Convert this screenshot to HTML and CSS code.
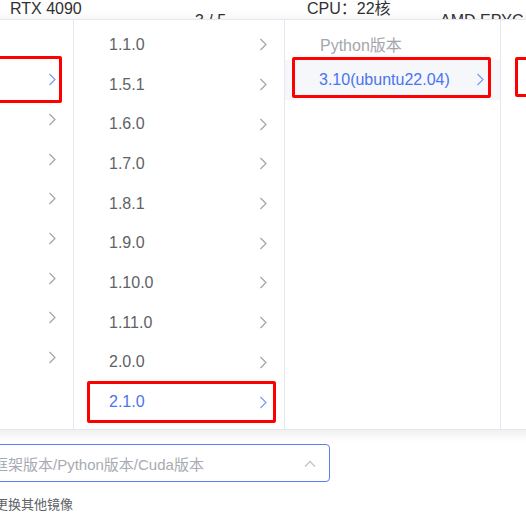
FILE: index.html
```html
<!DOCTYPE html>
<html lang="zh-CN">
<head>
    <meta charset="UTF-8">
    <meta name="viewport" content="width=device-width, initial-scale=1.0">
    <title>选择镜像</title>
    <link rel="stylesheet" href="styles.css">
</head>
<body>
    <div class="specs">
        <span class="spec">RTX 4090</span>
        <span class="spec spec-low">3 / 5</span>
        <span class="spec">CPU：22核</span>
        <span class="spec spec-low">AMD EPYC 7T83</span>
    </div>

    <div class="image-field">
        <div class="select is-focus">
            <span class="placeholder">框架版本/Python版本/Cuda版本</span>
            <svg class="select-arrow" viewBox="0 0 12 7" fill="none" stroke="currentColor" stroke-width="1.3">
                <path d="M1 6.5 6 1.5l5 5"/>
            </svg>
        </div>
        <a class="switch-link">更换其他镜像</a>
    </div>

    <!-- cascader dropdown -->
    <div class="cascader">
        <ul class="menu menu-frame">
            <li class="menu-title">框架版本</li>
            <li class="menu-item is-active">
                <span>PyTorch</span>
                <svg viewBox="0 0 8 13" fill="none" stroke="currentColor" stroke-width="1.2"><path d="M1.5 1 7 6.5 1.5 12"/></svg>
            </li>
            <li class="menu-item">
                <span>TensorFlow</span>
                <svg viewBox="0 0 8 13" fill="none" stroke="currentColor" stroke-width="1.2"><path d="M1.5 1 7 6.5 1.5 12"/></svg>
            </li>
            <li class="menu-item">
                <span>PaddlePaddle</span>
                <svg viewBox="0 0 8 13" fill="none" stroke="currentColor" stroke-width="1.2"><path d="M1.5 1 7 6.5 1.5 12"/></svg>
            </li>
            <li class="menu-item">
                <span>Miniconda</span>
                <svg viewBox="0 0 8 13" fill="none" stroke="currentColor" stroke-width="1.2"><path d="M1.5 1 7 6.5 1.5 12"/></svg>
            </li>
            <li class="menu-item">
                <span>TensorRT</span>
                <svg viewBox="0 0 8 13" fill="none" stroke="currentColor" stroke-width="1.2"><path d="M1.5 1 7 6.5 1.5 12"/></svg>
            </li>
            <li class="menu-item">
                <span>JAX</span>
                <svg viewBox="0 0 8 13" fill="none" stroke="currentColor" stroke-width="1.2"><path d="M1.5 1 7 6.5 1.5 12"/></svg>
            </li>
            <li class="menu-item">
                <span>MXNet</span>
                <svg viewBox="0 0 8 13" fill="none" stroke="currentColor" stroke-width="1.2"><path d="M1.5 1 7 6.5 1.5 12"/></svg>
            </li>
            <li class="menu-item">
                <span>Caffe</span>
                <svg viewBox="0 0 8 13" fill="none" stroke="currentColor" stroke-width="1.2"><path d="M1.5 1 7 6.5 1.5 12"/></svg>
            </li>
        </ul>

        <ul class="menu menu-version">
            <li class="menu-item"><span>1.1.0</span><svg viewBox="0 0 8 13" fill="none" stroke="currentColor" stroke-width="1.2"><path d="M1.5 1 7 6.5 1.5 12"/></svg></li>
            <li class="menu-item"><span>1.5.1</span><svg viewBox="0 0 8 13" fill="none" stroke="currentColor" stroke-width="1.2"><path d="M1.5 1 7 6.5 1.5 12"/></svg></li>
            <li class="menu-item"><span>1.6.0</span><svg viewBox="0 0 8 13" fill="none" stroke="currentColor" stroke-width="1.2"><path d="M1.5 1 7 6.5 1.5 12"/></svg></li>
            <li class="menu-item"><span>1.7.0</span><svg viewBox="0 0 8 13" fill="none" stroke="currentColor" stroke-width="1.2"><path d="M1.5 1 7 6.5 1.5 12"/></svg></li>
            <li class="menu-item"><span>1.8.1</span><svg viewBox="0 0 8 13" fill="none" stroke="currentColor" stroke-width="1.2"><path d="M1.5 1 7 6.5 1.5 12"/></svg></li>
            <li class="menu-item"><span>1.9.0</span><svg viewBox="0 0 8 13" fill="none" stroke="currentColor" stroke-width="1.2"><path d="M1.5 1 7 6.5 1.5 12"/></svg></li>
            <li class="menu-item"><span>1.10.0</span><svg viewBox="0 0 8 13" fill="none" stroke="currentColor" stroke-width="1.2"><path d="M1.5 1 7 6.5 1.5 12"/></svg></li>
            <li class="menu-item"><span>1.11.0</span><svg viewBox="0 0 8 13" fill="none" stroke="currentColor" stroke-width="1.2"><path d="M1.5 1 7 6.5 1.5 12"/></svg></li>
            <li class="menu-item"><span>2.0.0</span><svg viewBox="0 0 8 13" fill="none" stroke="currentColor" stroke-width="1.2"><path d="M1.5 1 7 6.5 1.5 12"/></svg></li>
            <li class="menu-item is-active"><span>2.1.0</span><svg viewBox="0 0 8 13" fill="none" stroke="currentColor" stroke-width="1.2"><path d="M1.5 1 7 6.5 1.5 12"/></svg></li>
        </ul>

        <ul class="menu menu-python">
            <li class="menu-title">Python版本</li>
            <li class="menu-item is-active is-hover"><span>3.10(ubuntu22.04)</span><svg viewBox="0 0 8 13" fill="none" stroke="currentColor" stroke-width="1.2"><path d="M1.5 1 7 6.5 1.5 12"/></svg></li>
        </ul>

        <ul class="menu menu-cuda">
            <li class="menu-title">Cuda版本</li>
            <li class="menu-item"><span>12.1</span></li>
        </ul>
    </div>

    <!-- red annotation boxes -->
    <div class="mark mark-frame"></div>
    <div class="mark mark-version"></div>
    <div class="mark mark-python"></div>
    <div class="mark mark-cuda"></div>
</body>
</html>
```

FILE: styles.css
```css
* {
    margin: 0;
    padding: 0;
    box-sizing: border-box;
}

body {
    position: relative;
    width: 526px;
    height: 526px;
    overflow: hidden;
    font-family: "Liberation Sans", "Noto Sans CJK SC", sans-serif;
    color: #303133;
    background: #ffffff;
}

ul {
    list-style: none;
}

.specs {
    display: grid;
    grid-template-columns: 185px 112px 133px auto;
    height: 40px;
    padding-left: 10px;
    font-size: 16px;
    line-height: 18px;
    white-space: nowrap;
}

.spec-low {
    padding-top: 12px;
}

.image-field {
    margin-top: 404px;
}

.select {
    display: flex;
    align-items: center;
    justify-content: space-between;
    width: 350px;
    height: 38px;
    margin-left: -20px;
    padding: 0 13px 0 12px;
    border: 1px solid #5b7ff2;
    border-radius: 4px;
    font-size: 15px;
    color: #a8abb2;
}

.select-arrow {
    width: 12px;
    height: 7px;
    color: #c0c4cc;
}

.switch-link {
    display: block;
    margin: 14px 0 0 -5px;
    font-size: 13px;
    line-height: 18px;
    color: #606266;
}

.cascader {
    position: absolute;
    top: 19px;
    left: -167px;
    z-index: 2;
    display: flex;
    height: 411px;
    background: #ffffff;
    border: 1px solid #e4e7ed;
    box-shadow: 0 2px 12px 0 rgba(0, 0, 0, 0.1);
}

.menu {
    flex: none;
    padding-top: 5px;
    border-right: 1px solid #e4e7ed;
    font-size: 16px;
    color: #606266;
    white-space: nowrap;
}

.menu-frame { width: 240px; }
.menu-version { width: 211px; }
.menu-python { width: 216px; }
.menu-cuda { width: 200px; border-right: none; }

.menu-title {
    display: flex;
    align-items: center;
    height: 35px;
    padding: 3px 0 0 35px;
    color: #a3a6ad;
}

.menu-item {
    display: flex;
    align-items: center;
    justify-content: space-between;
    height: 39.7px;
    padding: 0 17px 0 35px;
}

.menu-python .menu-item {
    padding: 0 16px 0 34px;
}

.menu-item svg {
    width: 8px;
    height: 13px;
    color: #a0a3a9;
}

.menu-item.is-active {
    color: #4a74f0;
}

.menu-item.is-active svg {
    color: #7a9af5;
}

.menu-item.is-hover {
    background: #f5f7fa;
}

.mark {
    position: absolute;
    z-index: 3;
    border: 3px solid #ff0000;
    border-radius: 2px;
}

.mark-frame { left: -20px; top: 56px; width: 82px; height: 47px; }
.mark-version { left: 87px; top: 381px; width: 189px; height: 42px; }
.mark-python { left: 292px; top: 57px; width: 199px; height: 41px; }
.mark-cuda { left: 515px; top: 57px; width: 40px; height: 40px; }
```
